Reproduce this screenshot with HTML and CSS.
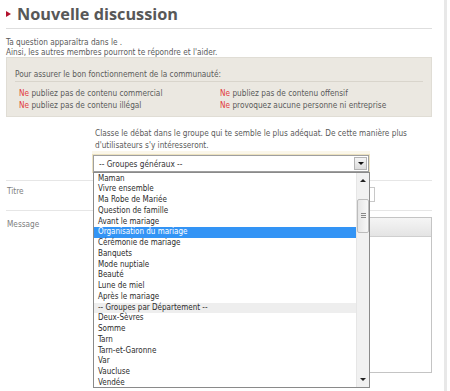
FILE: index.html
```html
<!DOCTYPE html>
<html lang="fr">
<head>
    <meta charset="UTF-8">
    <meta name="viewport" content="width=device-width, initial-scale=1.0">
    <title>Nouvelle discussion</title>
    <link rel="stylesheet" href="styles.css">
</head>
<body>
    <div class="page">
        <h1 class="title"><span class="bullet"></span>Nouvelle discussion</h1>

        <p class="intro">Ta question apparaîtra dans le .<br>Ainsi, les autres membres pourront te répondre et l'aider.</p>

        <div class="rules">
            <p class="rules-head">Pour assurer le bon fonctionnement de la communauté:</p>
            <ul class="rules-list">
                <li><span class="no">Ne</span> publiez pas de contenu commercial</li>
                <li><span class="no">Ne</span> publiez pas de contenu offensif</li>
                <li><span class="no">Ne</span> publiez pas de contenu illégal</li>
                <li><span class="no">Ne</span> provoquez aucune personne ni entreprise</li>
            </ul>
        </div>

        <div class="group-field">
            <p class="hint">Classe le débat dans le groupe qui te semble le plus adéquat. De cette manière plus<br>d'utilisateurs s'y intéresseront.</p>
            <div class="select-wrap">
                <div class="select">-- Groupes généraux --<span class="select-btn"></span></div>
                <div class="options">
                    <ul class="option-list">
                        <li>Maman</li>
                        <li>Vivre ensemble</li>
                        <li>Ma Robe de Mariée</li>
                        <li>Question de famille</li>
                        <li>Avant le mariage</li>
                        <li class="selected">Organisation du mariage</li>
                        <li>Cérémonie de mariage</li>
                        <li>Banquets</li>
                        <li>Mode nuptiale</li>
                        <li>Beauté</li>
                        <li>Lune de miel</li>
                        <li>Après le mariage</li>
                        <li class="group">-- Groupes par Département --</li>
                        <li>Deux-Sèvres</li>
                        <li>Somme</li>
                        <li>Tarn</li>
                        <li>Tarn-et-Garonne</li>
                        <li>Var</li>
                        <li>Vaucluse</li>
                        <li>Vendée</li>
                    </ul>
                    <div class="scrollbar">
                        <span class="arrow up"></span>
                        <span class="thumb"><span class="grip"></span></span>
                        <span class="arrow down"></span>
                    </div>
                </div>
            </div>
        </div>

        <div class="form-row first">
            <label class="form-label">Titre</label>
            <div class="input-box"></div>
        </div>
        <div class="form-row">
            <label class="form-label msg">Message</label>
            <div class="editor">
                <div class="toolbar"></div>
            </div>
        </div>
    </div>
</body>
</html>
```

FILE: styles.css
```css
* {
    margin: 0;
    padding: 0;
    box-sizing: border-box;
}

body {
    background: #fff;
    font-family: "DejaVu Sans Condensed", "Liberation Sans", sans-serif;
    font-size: 8.2px;
    color: #5a5a5a;
}

.page {
    width: 447px;
    height: 391px;
    padding: 0 12px 0 6px;
    border-right: 3px solid #e8e8e8;
    overflow: hidden;
}

.title {
    display: flex;
    align-items: center;
    gap: 6px;
    height: 29px;
    font-family: "Open Sans", sans-serif;
    font-weight: 700;
    font-size: 16.3px;
    line-height: 24px;
    color: #585858;
    border-bottom: 1px solid #dedede;
}

.bullet {
    width: 0;
    height: 0;
    border-left: 5px solid #b3122e;
    border-top: 3.5px solid transparent;
    border-bottom: 3.5px solid transparent;
}

.intro {
    margin-top: 8px;
    line-height: 10px;
}

.rules {
    background: #ebe8e1;
    border: 1px solid #e0ddd5;
    padding: 11px 8px 6px;
}

.rules-head {
    line-height: 10px;
    padding-bottom: 2px;
    border-bottom: 1px solid #d9d5cc;
}

.rules-list {
    list-style: none;
    display: grid;
    grid-template-columns: 201px 1fr;
    row-gap: 2px;
    margin-top: 6px;
    padding-left: 4px;
    line-height: 10px;
}

.no {
    color: #e23c3c;
}

.group-field {
    padding-left: 87px;
}

.hint {
    margin-top: 10px;
    padding-left: 2px;
    line-height: 12px;
}

.select-wrap {
    position: relative;
    width: 276px;
    margin-top: 4px;
}

.select {
    display: flex;
    align-items: center;
    justify-content: space-between;
    height: 17px;
    padding: 0 1px 0 5px;
    background: #fff;
    border: 1px solid #9f9f9f;
    box-shadow: 0 0 0 1px #ece2c0, 0 -3px 0 1px #fbf7ea;
    color: #333;
}

.select-btn {
    position: relative;
    width: 13px;
    height: 13px;
    background: linear-gradient(#f4f4f4, #dcdcdc);
    border: 1px solid #b4b4b4;
}

.select-btn::after {
    content: "";
    position: absolute;
    left: 3px;
    top: 4px;
    border-top: 3px solid #111;
    border-left: 3px solid transparent;
    border-right: 3px solid transparent;
}

.options {
    position: absolute;
    top: 17px;
    left: 0;
    width: 277px;
    height: 216px;
    display: flex;
    background: #fff;
    border: 1px solid #8a8a8a;
    z-index: 5;
}

.option-list {
    list-style: none;
    flex: 1;
    padding-top: 0.5px;
    color: #2b2b2b;
    font-size: 8px;
}

.option-list li {
    height: 10.75px;
    line-height: 10.75px;
    padding-left: 4px;
    white-space: nowrap;
}

.option-list .selected {
    background: #3394f5;
    color: #fff;
}

.option-list .group {
    background: #eeeeee;
}

.scrollbar {
    position: relative;
    width: 13px;
    background: #f1f1f1;
    border-left: 1px solid #e6e6e6;
}

.arrow {
    position: absolute;
    left: 3px;
    border-left: 3px solid transparent;
    border-right: 3px solid transparent;
}

.arrow.up {
    top: 6px;
    border-bottom: 3px solid #222;
}

.arrow.down {
    bottom: 6px;
    border-top: 3px solid #222;
}

.thumb {
    position: absolute;
    top: 26px;
    left: 0;
    width: 12px;
    height: 34px;
    background: linear-gradient(90deg, #e6e6e6, #f7f7f7);
    border: 1px solid #bcbcbc;
    border-radius: 2px;
}

.grip {
    position: absolute;
    left: 3px;
    top: 13px;
    width: 5px;
    height: 5px;
    border-top: 1px solid #888;
    border-bottom: 1px solid #888;
}

.grip::after {
    content: "";
    position: absolute;
    left: 0;
    top: 1px;
    width: 5px;
    border-top: 1px solid #888;
}

.form-row {
    display: flex;
    border-top: 1px solid #e6e6e6;
}

.form-row.first {
    margin-top: 8px;
}

.form-label {
    width: 87px;
    padding: 5px 0 0 1px;
    line-height: 10px;
    color: #808080;
}

.form-label.msg {
    padding-top: 8px;
}

.input-box {
    width: 282px;
    height: 15px;
    margin: 6px 0 8px;
    border: 1px solid #c8c8c8;
}

.editor {
    flex: 1;
    height: 156px;
    margin-top: 6px;
    border: 1px solid #c4c4c4;
}

.toolbar {
    height: 19px;
    background: linear-gradient(#f5f5f5, #e4e4e4);
    border-bottom: 1px solid #cfcfcf;
}
```
